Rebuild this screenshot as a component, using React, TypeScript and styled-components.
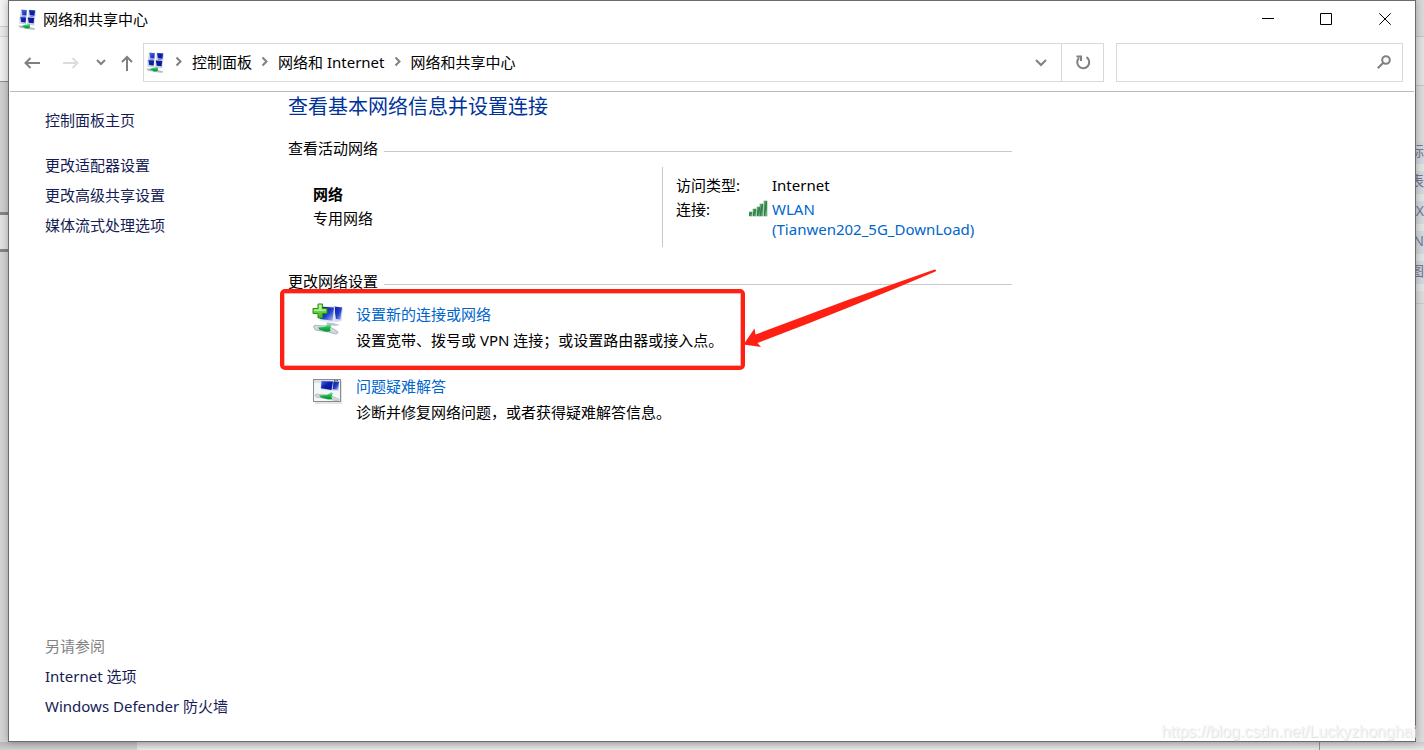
import React from "react";
import styled, { createGlobalStyle } from "styled-components";

const GlobalStyle = createGlobalStyle`
  *, *::before, *::after { box-sizing: border-box; }
  body {
    margin: 0;
    font-family: "Noto Sans", "Noto Sans CJK SC", sans-serif;
    font-size: 15px;
    line-height: 20px;
    color: #000;
    background: #e4e4e4;
  }
  button, input { font: inherit; color: inherit; }
`;

/* ---------- desktop behind the window ---------- */

const Desktop = styled.div`
  display: grid;
  grid-template-columns: 8px minmax(0, 1fr) 8px;
  grid-template-rows: 1fr 8px;
  min-height: 100vh;
  overflow: hidden;
`;

const EdgeColumn = styled.div`
  display: flex;
  flex-direction: column;
  min-height: 0;
  overflow: hidden;
`;

const EdgeBand = styled.div<{ $size?: number; $tone: string; $line?: string; $thick?: number }>`
  flex: ${(p) => (p.$size ? `0 0 ${p.$size}px` : "1")};
  background: ${(p) => p.$tone};
  border-bottom: ${(p) => (p.$line ? `${p.$thick ?? 1}px solid ${p.$line}` : "none")};
  overflow: hidden;
`;

const EdgeText = styled.div`
  height: 23px;
  flex: none;
  margin-bottom: 7px;
  background: #d5d8de;
  color: #77778f;
  font-size: 14px;
  line-height: 20px;
  white-space: nowrap;
  display: flex;
  justify-content: flex-end;
`;

const BottomStrip = styled.div`
  grid-column: 1 / -1;
  display: flex;
`;

const BottomBand = styled.div<{ $size?: number; $tone: string; $edge?: boolean }>`
  flex: ${(p) => (p.$size ? `0 0 ${p.$size}px` : "1")};
  background: linear-gradient(rgba(0, 0, 0, 0.14), rgba(0, 0, 0, 0.02)) ${(p) => p.$tone};
  border-right: ${(p) => (p.$edge ? "1px solid #909090" : "none")};
`;

/* ---------- window ---------- */

const Window = styled.div`
  position: relative;
  display: flex;
  flex-direction: column;
  background: #fff;
  border: 1px solid #6b6b6b;
  box-shadow: 0 0 8px rgba(0, 0, 0, 0.3);
`;

const TitleBar = styled.header`
  display: flex;
  align-items: center;
  height: 36px;
  padding-left: 9px;
`;

const Title = styled.h1`
  flex: 1;
  margin: 0 0 0 5px;
  font-size: 15px;
  font-weight: 400;
`;

const IconButton = styled.button<{ $width: number }>`
  display: flex;
  align-items: center;
  justify-content: center;
  flex: none;
  width: ${(p) => p.$width}px;
  height: 36px;
  padding: 0;
  border: 0;
  background: transparent;
`;

const NavBar = styled.nav`
  display: flex;
  align-items: center;
  height: 55px;
  margin: 0 1px;
  padding: 0 11px 4px 3px;
  border-bottom: 1px solid #bcbcbc;
`;

const AddressBox = styled.div`
  display: flex;
  align-items: stretch;
  flex: 1;
  height: 39px;
  border: 1px solid #d9d9d9;
`;

const Crumbs = styled.ol`
  display: flex;
  align-items: center;
  flex: 1;
  margin: 0;
  padding: 0 0 0 2px;
  list-style: none;
`;

const Crumb = styled.li`
  display: flex;
  align-items: center;
  white-space: nowrap;
`;

const CrumbLink = styled.a`
  color: #000;
  text-decoration: none;
`;

const AddressAction = styled(IconButton)<{ $divided?: boolean }>`
  height: auto;
  border-left: ${(p) => (p.$divided ? "1px solid #d9d9d9" : "none")};
`;

const SearchBox = styled.form`
  display: flex;
  align-items: center;
  flex: 0 0 287px;
  height: 39px;
  margin-left: 12px;
  border: 1px solid #d9d9d9;
`;

const SearchInput = styled.input`
  flex: 1;
  min-width: 0;
  padding: 0 8px;
  border: 0;
  outline: 0;
  background: transparent;
`;

const Body = styled.div`
  display: flex;
  flex: 1;
`;

const Sidebar = styled.aside`
  display: flex;
  flex-direction: column;
  justify-content: space-between;
  flex: 0 0 279px;
  padding: 13px 0 20px 36px;
  line-height: 30px;
`;

const SideList = styled.ul`
  margin: 0;
  padding: 0;
  list-style: none;
`;

const SideItem = styled.li<{ $spaced?: boolean }>`
  margin-bottom: ${(p) => (p.$spaced ? "15px" : "0")};
`;

const SideLink = styled.a`
  color: #151c55;
  text-decoration: none;
`;

const SideHeading = styled.h2`
  margin: 0;
  font-size: 15px;
  font-weight: 400;
  color: #838383;
`;

const Main = styled.main`
  flex: 1;
  max-width: 724px;
  padding-top: 1px;
`;

const PageHeading = styled.h2`
  margin: 0;
  font-size: 20px;
  font-weight: 400;
  line-height: 28px;
  color: #003399;
`;

const SectionHeading = styled.h3<{ $gap: number }>`
  display: flex;
  align-items: center;
  margin: ${(p) => p.$gap}px 0 0;
  font-size: 15px;
  font-weight: 400;
  line-height: 24px;

  &::after {
    content: "";
    flex: 1;
    height: 1px;
    margin: 6px 0 0 6px;
    background: #c8c8c8;
  }
`;

const NetworkPanel = styled.div`
  display: flex;
  min-height: 80px;
  margin-top: 7px;
`;

const NetworkName = styled.div`
  flex: 0 0 374px;
  padding: 15px 0 0 25px;
  line-height: 24px;
`;

const NetworkFacts = styled.dl`
  display: grid;
  grid-template-columns: 73px 23px 1fr;
  row-gap: 4px;
  align-content: start;
  flex: 1;
  margin: 0;
  padding: 8px 0 0 13px;
  border-left: 1px solid #c8c8c8;
`;

const FactLabel = styled.dt`
  grid-column: 1;
`;

const FactIcon = styled.dd`
  grid-column: 2;
  margin: 0;
`;

const FactValue = styled.dd`
  grid-column: 3;
  margin: 0;
`;

const ActionLink = styled.a`
  color: #0066cc;
  text-decoration: none;
`;

const TaskList = styled.ul`
  display: flex;
  flex-direction: column;
  gap: 20px;
  margin: 8px 0 0;
  padding: 0 0 0 24px;
  list-style: none;
`;

const Task = styled.li`
  position: relative;
  display: flex;
  gap: 12px;
  line-height: 26px;
`;

const TaskIcon = styled.div`
  display: flex;
  padding-top: 2px;
  height: 34px;
`;

const TaskText = styled.p`
  margin: 0;
`;

const Highlight = styled.div`
  position: absolute;
  top: -12px;
  left: -32px;
  width: 465px;
  height: 81px;
  border: 4px solid #ff2014;
  border-radius: 5px;
  box-shadow: inset 0 0 0 1px rgba(255, 32, 20, 0.35);
  pointer-events: none;
`;

const Arrow = styled.svg`
  position: absolute;
  top: -33px;
  left: 431px;
  pointer-events: none;
`;

const Watermark = styled.div`
  position: absolute;
  right: -1px;
  bottom: 0;
  font-family: "Liberation Sans", sans-serif;
  font-size: 16px;
  line-height: 18px;
  color: #f6f6f6;
  text-shadow: 1px 1px 1px #dedede;
`;

/* ---------- drawings ---------- */

function Gradients() {
  return (
    <svg width="0" height="0" style={{ position: "absolute" }} aria-hidden="true">
      <defs>
        <linearGradient id="screen" x1="0" y1="0" x2="1" y2="1">
          <stop offset="0" stopColor="#4a74f0" />
          <stop offset="0.45" stopColor="#0c1fae" />
          <stop offset="1" stopColor="#0a1596" />
        </linearGradient>
        <linearGradient id="screenFade" x1="0" y1="0" x2="1" y2="1">
          <stop offset="0" stopColor="#0817a0" />
          <stop offset="0.55" stopColor="#2240c8" />
          <stop offset="1" stopColor="#b7c8fa" />
        </linearGradient>
        <linearGradient id="tube" x1="0" y1="0" x2="0" y2="1">
          <stop offset="0" stopColor="#7ff0a2" />
          <stop offset="0.5" stopColor="#12b848" />
          <stop offset="1" stopColor="#078a32" />
        </linearGradient>
        <linearGradient id="plus" x1="0" y1="0" x2="0" y2="1">
          <stop offset="0" stopColor="#a6f078" />
          <stop offset="1" stopColor="#35b51c" />
        </linearGradient>
        <linearGradient id="bars" x1="0" y1="0" x2="1" y2="1">
          <stop offset="0" stopColor="#8fc79a" />
          <stop offset="0.5" stopColor="#257a3d" />
          <stop offset="1" stopColor="#b4dcbc" />
        </linearGradient>
      </defs>
    </svg>
  );
}

function NetworkIcon() {
  return (
    <svg width="20" height="21" viewBox="0 0 20 21" aria-hidden="true">
      <path d="M3 .5l6 .3-.3 8L2 8zM10.500.800l7.500.5-.8 8-7-.6zM1.500 8l7 .6-.5 7-6.500-1.200zM9.500 8.500l7.500.6-.8 7.400-7-1z" fill="#c9cfe4" />
      <path d="M3.500.800l5.200.4-.4 5.300-4-.4zM11 1l6 .4-.6 5.400-4.500-.5zM2.300 8l5.800.5-.5 5-4.400-.6zM9.800 8.500l6.300.4-.5 5.400-4.800-.6z" fill="url(#screen)" />
      <path d="M4.500 6.500l3 .2-.3 1-3.500-.3zM12.500 7l3 .2.2 1-3.500-.3z" fill="#7881b0" />
      <path d="M.3 16.500l4 .2 8 1.600 4.700 1-.3 1.400-4.300-.3-10.500-1.700z" fill="#b3bbc2" />
      <path d="M3.300 17l7.700-2.200 1.200.6-.5 3.700-3.400.3z" fill="url(#tube)" />
    </svg>
  );
}

function SetupIcon() {
  return (
    <svg width="32" height="32" viewBox="0 0 32 32" aria-hidden="true">
      <path d="M18 3l13 1-1.500 14-5 1-6-1z" fill="#d5dcee" />
      <path d="M22 3.600l8 .8-1.600 12.300-4.400-.6z" fill="url(#screenFade)" />
      <path d="M9 3l14 .5-.7 16L7.500 18z" fill="#e4e8f4" />
      <path d="M10 3.800l12 .6-1.400 13.300L8 16z" fill="url(#screenFade)" />
      <path d="M15 19.500l8 1 5 1.500-5 .7-9-1.300z" fill="#b9c0c8" />
      <path d="M1.500 24c0-1.800 2-2.200 4-1.500l11 .5 9 5.500c1 .8 0 3-2 2.500l-7-2-13-2z" fill="#d3dadc" stroke="#9ba7a9" strokeWidth=".8" />
      <path d="M6 24.500l7-.7 3.500-2.800 3 .7-1.500 4 .5 2.500-4 .5-7-2z" fill="url(#tube)" />
      <path d="M6 1h4.500v4.500H15v5h-4.500V15H6v-4.500H1v-5h5z" fill="url(#plus)" stroke="#259018" />
      <path d="M7 2.200h2.300v4.200h4.500v1.700H2.200V6.500H7z" fill="#caf9a9" opacity=".7" />
    </svg>
  );
}

function TroubleshootIcon() {
  return (
    <svg width="32" height="32" viewBox="0 0 32 32" aria-hidden="true">
      <path d="M3 6h27v23H3z" fill="#d8d8d8" opacity=".7" />
      <rect x="1.500" y="4.500" width="27" height="22" fill="#f4f6f8" stroke="#868b90" />
      <path d="M2 5h26v3H2z" fill="#dde1e5" />
      <path d="M9 5.500l18 1-.5 9.500-18-1.500z" fill="#d3daec" />
      <path d="M9.500 6l11.500.5-1.500 8.500-10.500-1.800z" fill="url(#screen)" />
      <path d="M21.500 6.500l5.500.3-.8 8-5.500-.6z" fill="url(#screenFade)" />
      <path d="M22 5.500h1.500M24.500 5.500H26" stroke="#555" />
      <path d="M3 20c1-1.500 3-1 4-.5l11 .5 9 4.500c0 1.500-2 1.500-3 1l-8-1.500-12-2z" fill="#d3dadc" stroke="#9ba7a9" strokeWidth=".6" />
      <path d="M7 20.500l8-.5 4-2.700 2 .7-1.500 3.500.5 2.500-4 .3-7-1.800z" fill="url(#tube)" />
    </svg>
  );
}

function SignalIcon() {
  return (
    <svg width="20" height="20" viewBox="0 0 20 20" aria-hidden="true">
      {[0, 1, 2, 3, 4].map((i) => (
        <rect
          key={i}
          x={i * 4 - (i > 2 ? 1 : 0)}
          y={13 - i * 3 + (i > 1 ? 1 : 0)}
          width="3"
          height={4 + i * 3 - (i > 1 ? 1 : 0)}
          fill="url(#bars)"
          stroke="#3f8a53"
          strokeWidth=".5"
        />
      ))}
    </svg>
  );
}

function LineIcon({ d, w, h, color = "#808080", weight = 2 }: { d: string; w: number; h: number; color?: string; weight?: number }) {
  return (
    <svg width={w} height={h} viewBox={`0 0 ${w} ${h}`} fill="none" stroke={color} strokeWidth={weight} aria-hidden="true">
      <path d={d} />
    </svg>
  );
}

function CrumbChevron() {
  return <LineIcon w={26} h={12} d="M10.500 1.500l4 4-4 4" color="#808080" />;
}

const crumbs = ["控制面板", "网络和 Internet", "网络和共享中心"];
const sideLinks = ["控制面板主页", "更改适配器设置", "更改高级共享设置", "媒体流式处理选项"];
const seeAlso = ["Internet 选项", "Windows Defender 防火墙"];
const edgeTexts = ["标", "表", "eX", "_N", "图"];

export default function App() {
  return (
    <Desktop>
      <GlobalStyle />
      <Gradients />
      <EdgeColumn aria-hidden="true">
        <EdgeBand $size={27} $tone="#f4f4f4" $line="#cdcdcd" />
        <EdgeBand $size={10} $tone="#ebebeb" $line="#d4d4d4" />
        <EdgeBand $size={45} $tone="#f0f0f0" $line="#8d8d8d" />
        <EdgeBand $size={133} $tone="#d0d0d0" $line="#858585" $thick={3} />
        <EdgeBand $size={37} $tone="#e2e2e2" $line="#858585" $thick={3} />
        <EdgeBand $tone="#d4d4d4" />
      </EdgeColumn>

      <Window>
        <TitleBar>
          <NetworkIcon />
          <Title>网络和共享中心</Title>
          <IconButton $width={58} aria-label="最小化">
            <LineIcon w={12} h={12} d="M0 5.500h12" color="#000" weight={1} />
          </IconButton>
          <IconButton $width={58} aria-label="最大化">
            <LineIcon w={12} h={12} d="M.5.500h11v11H.5z" color="#000" weight={1} />
          </IconButton>
          <IconButton $width={60} aria-label="关闭">
            <LineIcon w={12} h={12} d="M.3.300l11.400 11.400M11.700.300L.300 11.700" color="#000" weight={1} />
          </IconButton>
        </TitleBar>

        <NavBar aria-label="地址">
          <IconButton $width={38} aria-label="后退">
            <LineIcon w={16} h={14} d="M16 8H1.500M6.500 3L1.500 8l5 5" />
          </IconButton>
          <IconButton $width={40} aria-label="前进">
            <LineIcon w={16} h={14} d="M0 8h14.500M9.500 3l5 5-5 5" color="#dcdcdc" />
          </IconButton>
          <IconButton $width={20} aria-label="最近的位置">
            <LineIcon w={10} h={8} d="M1 2l4 4 4-4" />
          </IconButton>
          <IconButton $width={32} aria-label="上移">
            <LineIcon w={12} h={18} d="M6 18V4M1 9l5-5 5 5" />
          </IconButton>
          <AddressBox>
            <Crumbs>
              <Crumb>
                <NetworkIcon />
              </Crumb>
              {crumbs.map((name) => (
                <Crumb key={name}>
                  <CrumbChevron />
                  <CrumbLink href="#">{name}</CrumbLink>
                </Crumb>
              ))}
            </Crumbs>
            <AddressAction $width={41} aria-label="展开地址">
              <LineIcon w={12} h={10} d="M1 3l5 5 5-5" />
            </AddressAction>
            <AddressAction $width={42} $divided aria-label="刷新">
              <LineIcon w={16} h={16} d="M11.500 3.200A6 6 0 1 1 4 4M1.500 2.500H6V7" />
            </AddressAction>
          </AddressBox>
          <SearchBox role="search">
            <SearchInput type="search" aria-label="搜索控制面板" />
            <IconButton $width={36} type="button" aria-label="搜索">
              <svg width="14" height="14" viewBox="0 0 14 14" fill="none" stroke="#808080" aria-hidden="true">
                <circle cx="9" cy="5" r="3.800" strokeWidth="2" />
                <path d="M6.300 7.700L.8 13.200" strokeWidth="2" />
              </svg>
            </IconButton>
          </SearchBox>
        </NavBar>

        <Body>
          <Sidebar>
            <SideList>
              {sideLinks.map((name, i) => (
                <SideItem key={name} $spaced={i === 0}>
                  <SideLink href="#">{name}</SideLink>
                </SideItem>
              ))}
            </SideList>
            <section>
              <SideHeading>另请参阅</SideHeading>
              <SideList>
                {seeAlso.map((name) => (
                  <SideItem key={name}>
                    <SideLink href="#">{name}</SideLink>
                  </SideItem>
                ))}
              </SideList>
            </section>
          </Sidebar>

          <Main>
            <PageHeading>查看基本网络信息并设置连接</PageHeading>
            <SectionHeading $gap={15}>查看活动网络</SectionHeading>
            <NetworkPanel>
              <NetworkName>
                <strong>网络</strong>
                <div>专用网络</div>
              </NetworkName>
              <NetworkFacts>
                <FactLabel>访问类型:</FactLabel>
                <FactValue>Internet</FactValue>
                <FactLabel>连接:</FactLabel>
                <FactIcon>
                  <SignalIcon />
                </FactIcon>
                <FactValue>
                  <ActionLink href="#">
                    WLAN
                    <br />
                    (Tianwen202_5G_DownLoad)
                  </ActionLink>
                </FactValue>
              </NetworkFacts>
            </NetworkPanel>

            <SectionHeading $gap={22}>更改网络设置</SectionHeading>
            <TaskList>
              <Task>
                <TaskIcon>
                  <SetupIcon />
                </TaskIcon>
                <div>
                  <ActionLink href="#">设置新的连接或网络</ActionLink>
                  <TaskText>设置宽带、拨号或 VPN 连接；或设置路由器或接入点。</TaskText>
                </div>
                <Highlight />
                <Arrow width="194" height="80" viewBox="743 268 194 80" aria-hidden="true">
                  <path
                    d="M743.500 344.500L754.500 328.500L755.500 334.500Q845 300 934.500 269.500Q937 269.500 935.500 271.500Q850 308 757.500 343L761 347Z"
                    fill="#ff2014"
                  />
                </Arrow>
              </Task>
              <Task>
                <TaskIcon>
                  <TroubleshootIcon />
                </TaskIcon>
                <div>
                  <ActionLink href="#">问题疑难解答</ActionLink>
                  <TaskText>诊断并修复网络问题，或者获得疑难解答信息。</TaskText>
                </div>
              </Task>
            </TaskList>
          </Main>
        </Body>
        <Watermark>https://blog.csdn.net/Luckyzhonghai</Watermark>
      </Window>

      <EdgeColumn aria-hidden="true">
        <EdgeBand $size={37} $tone="#d9d9d9" $line="#c4c4c4" />
        <EdgeBand $size={49} $tone="#e2e2e2" $line="#c4c4c4" />
        <EdgeBand $size={55} $tone="#dcdcdc" />
        {edgeTexts.map((t) => (
          <EdgeText key={t}>{t}</EdgeText>
        ))}
        <EdgeBand $size={13} $tone="#dcdcdc" $line="#c8c8c8" />
        <EdgeBand $tone="#dcdcdc" />
      </EdgeColumn>

      <BottomStrip aria-hidden="true">
        <BottomBand $size={137} $tone="#d4d4d4" />
        <BottomBand $tone="#ececec" $edge />
        <BottomBand $size={104} $tone="#ececec" />
      </BottomStrip>
    </Desktop>
  );
}
